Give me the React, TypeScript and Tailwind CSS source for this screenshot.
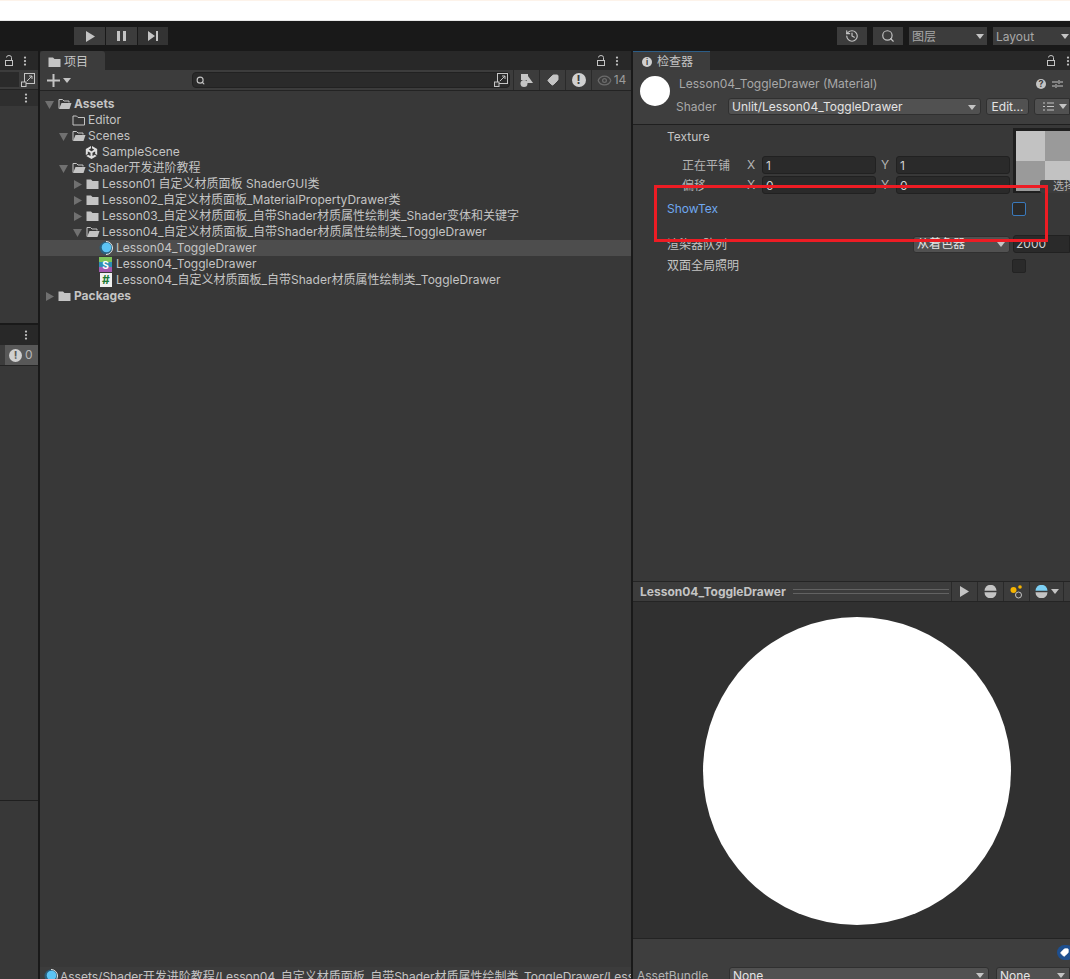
import type { ReactNode } from 'react';
import { Eye, History, MoreVertical, Search, Tag } from 'lucide-react';
import { FaUnity } from 'react-icons/fa6';

const Arrow = ({ open }: { open?: boolean }) => (
    <svg width="11" height="11" viewBox="0 0 11 11" className="shrink-0">
        {open ? <path d="M1 2h9L5.500 10z" fill="#707070" /> : <path d="M2 1v9l8-4.500z" fill="#707070" />}
    </svg>
);

const FolderFull = () => (
    <svg width="13" height="12" viewBox="0 0 13 12" className="shrink-0">
        <path d="M0.500 1.500h4.500l1.500 1.500h6v8h-12z" fill="#c4c4c4" />
    </svg>
);

const FolderOpen = () => (
    <svg width="14" height="12" viewBox="0 0 14 12" className="shrink-0">
        <path d="M1 10.500v-9h3.500l1.500 1.500h5v1.500" fill="none" stroke="#c4c4c4" />
        <path d="M1 11l2.500-6h10l-2 6z" fill="#c4c4c4" />
    </svg>
);

const FolderEmpty = () => (
    <svg width="13" height="12" viewBox="0 0 13 12" className="shrink-0">
        <path d="M1 2h3.500l1.500 1.500h6.500v7.500h-11.500z" fill="none" stroke="#c4c4c4" />
    </svg>
);

const MaterialIcon = () => (
    <svg width="14" height="14" viewBox="0 0 14 14" className="shrink-0 -ml-[1px]">
        <circle cx="7" cy="7" r="6.500" fill="#2b5f7c" />
        <path d="M7 0.500a6.500 6.500 0 0 1 0 13" fill="none" stroke="#e8e8e8" strokeWidth="1" />
        <circle cx="7.500" cy="6.500" r="4.800" fill="#5cc4f5" />
    </svg>
);

const ShaderIcon = () => (
    <svg width="13" height="15" viewBox="0 0 13 15" className="shrink-0 -ml-[1px]">
        <rect width="13" height="5" fill="#7cc35a" />
        <rect y="5" width="13" height="5" fill="#2f8fb5" />
        <rect y="10" width="13" height="5" fill="#a45bb0" />
        <text x="6.500" y="11.500" textAnchor="middle" fontSize="10" fontWeight="700" fill="#fff" fontFamily="Inter, sans-serif">S</text>
    </svg>
);

const ScriptIcon = () => (
    <div className="w-[12px] h-[14px] bg-[#f0f0f0] shrink-0 flex items-center justify-center text-[12px] font-bold leading-none text-[#1c7a35]">
        #
    </div>
);

const LockIcon = () => (
    <svg width="9" height="11" viewBox="0 0 9 11" className="shrink-0">
        <path d="M1.500 2.500a2.500 2 0 0 1 5 0V5" fill="none" stroke="#c4c4c4" />
        <rect x="0.500" y="5.500" width="7" height="5" fill="none" stroke="#c4c4c4" />
    </svg>
);

const Dots = () => <MoreVertical size={12} strokeWidth={2.500} color="#c4c4c4" className="shrink-0" />;

const SearchTypeIcon = () => (
    <svg width="14" height="14" viewBox="0 0 14 14" className="shrink-0">
        <rect x="3.500" y="0.500" width="10" height="10" fill="none" stroke="#c4c4c4" />
        <path d="M6 8l5-5M8 3h3v3" fill="none" stroke="#c4c4c4" />
        <rect x="0.500" y="9" width="4.500" height="4.500" fill="#383838" stroke="#c4c4c4" />
    </svg>
);

const Caret = ({ color = '#c4c4c4' }: { color?: string }) => (
    <svg width="8" height="5" viewBox="0 0 8 5" className="shrink-0">
        <path d="M0 0h8L4 5z" fill={color} />
    </svg>
);

const SplitSphere = ({ top = '#c4c4c4' }: { top?: string }) => (
    <svg width="13" height="13" viewBox="0 0 13 13" className="shrink-0">
        <path d="M0.500 5.800a6 6 0 0 1 12 0z" fill={top} />
        <path d="M0.500 7.300a6 6 0 0 0 12 0z" fill="#c4c4c4" />
    </svg>
);

type RowProps = { indent: number; icon?: ReactNode; arrow?: 'open' | 'closed'; selected?: boolean; bold?: boolean; children: ReactNode };

const TreeRow = ({ indent, icon, arrow, selected, bold, children }: RowProps) => (
    <div
        className={`h-[16px] flex items-center whitespace-nowrap ${selected ? 'bg-[#4d4d4d]' : ''} ${bold ? 'font-bold' : ''}`}
        style={{ paddingLeft: indent }}
    >
        <div className="w-[14px] shrink-0 flex items-center">{arrow && <Arrow open={arrow === 'open'} />}</div>
        <div className="w-[14px] shrink-0 flex items-center">{icon}</div>
        <span className="ml-[2px]">{children}</span>
    </div>
);

const Dropdown = ({ className, children }: { className: string; children: ReactNode }) => (
    <div className={`flex items-center justify-between rounded-[3px] bg-[#515151] border border-[#303030] pl-[3px] pr-[4px] overflow-hidden whitespace-nowrap text-[#e4e4e4] ${className}`}>
        {children}
    </div>
);

const NumberField = ({ label, value }: { label: string; value: string }) => (
    <div className="flex items-center">
        <span className="w-[15px] text-[#b4b4b4] shrink-0">{label}</span>
        <div className="w-[114px] h-[18px] rounded-[3px] bg-[#2a2a2a] border border-[#212121] px-[3px] pt-[2px] flex items-center text-[#d2d2d2]">{value}</div>
    </div>
);

const IconCell = ({ children, className = '' }: { children: ReactNode; className?: string }) => (
    <div className={`h-full flex items-center justify-center border-l border-[#2a2a2a] ${className}`}>{children}</div>
);

const App = () => {
    return (
        <div
            className="relative w-[1070px] h-[979px] overflow-hidden bg-[#191919] text-[12px] leading-[16px] text-[#c4c4c4] flex flex-col"
            style={{ fontFamily: 'Inter, "Noto Sans CJK SC", sans-serif' }}
        >
            {/* browser strip above the editor */}
            <div className="h-[21px] shrink-0 bg-white border-t border-[#fdf3ea] border-b border-b-[#e8e8e8]" />

            {/* play bar */}
            <div className="h-[30px] shrink-0 bg-[#191919] flex items-center">
                <div className="ml-[74px] flex gap-[1px] h-[18px]">
                    <div className="w-[31px] bg-[#3c3c3c] flex items-center justify-center">
                        <svg width="10" height="11" viewBox="0 0 10 11"><path d="M1 0v11l9-5.500z" fill="#c4c4c4" /></svg>
                    </div>
                    <div className="w-[31px] bg-[#3c3c3c] flex items-center justify-center">
                        <svg width="9" height="10" viewBox="0 0 9 10"><path d="M0 0h3v10H0zM6 0h3v10H6z" fill="#c4c4c4" /></svg>
                    </div>
                    <div className="w-[30px] bg-[#333333] flex items-center justify-center">
                        <svg width="10" height="10" viewBox="0 0 10 10"><path d="M0 0v10l7-5zM8 0h2v10H8z" fill="#c4c4c4" /></svg>
                    </div>
                </div>
                <div className="ml-auto flex items-center h-[18px] text-[#a8a8a8]">
                    <div className="w-[30px] h-full bg-[#3c3c3c] flex items-center justify-center"><History size={14} color="#c4c4c4" /></div>
                    <div className="ml-[6px] w-[30px] h-full bg-[#3c3c3c] flex items-center justify-center"><Search size={14} color="#c4c4c4" /></div>
                    <div className="ml-[6px] w-[78px] h-full bg-[#3c3c3c] flex items-center justify-between pl-[3px] pr-[3px] pt-[1px]">图层<Caret /></div>
                    <div className="ml-[6px] w-[77px] h-full bg-[#3c3c3c] flex items-center justify-between pl-[3px] pr-[1px] pt-[1px]">Layout<Caret /></div>
                </div>
            </div>

            <div className="flex-1 min-h-0 flex gap-[2px]">
                {/* hierarchy and console, cut off by the crop */}
                <div className="w-[38px] shrink-0 flex flex-col bg-[#383838]">
                    <div className="h-[19px] shrink-0 bg-[#282828] flex items-center justify-end gap-[5px] pr-[7px]"><LockIcon /><Dots /></div>
                    <div className="h-[20px] shrink-0 bg-[#3c3c3c] border-b border-[#232323] flex items-center justify-end gap-[2px] pr-[3px]">
                        <div className="flex-1 h-[15px] bg-[#2a2a2a]" />
                        <SearchTypeIcon />
                    </div>
                    <div className="h-[16px] shrink-0 bg-[#2e2e2e] flex items-center justify-end pr-[6px]"><Dots /></div>
                    <div className="h-[217px] shrink-0" />
                    <div className="h-[2px] shrink-0 bg-[#191919]" />
                    <div className="h-[20px] shrink-0 bg-[#282828] flex items-center justify-end pr-[6px]"><Dots /></div>
                    <div className="h-[21px] shrink-0 bg-[#3c3c3c] border-b border-[#232323] flex items-center justify-end">
                        <div className="w-[33px] h-full bg-[#585858] flex items-center gap-[3px] pl-[4px]">
                            <div className="w-[13px] h-[13px] rounded-full bg-[#d0d0d0] text-[#585858] text-[11px] font-bold flex items-center justify-center">!</div>
                            <span className="text-[#b8b8b8]">0</span>
                        </div>
                    </div>
                    <div className="h-[435px] shrink-0 border-b border-[#1f1f1f]" />
                </div>

                {/* project panel */}
                <div className="w-[591px] shrink-0 flex flex-col bg-[#383838]">
                    <div className="h-[19px] shrink-0 bg-[#282828] flex items-stretch">
                        <div className="w-[65px] bg-[#3c3c3c] rounded-t-[3px] flex items-center gap-[3px] pl-[8px] pt-[2px] text-[#c4c4c4]">
                            <FolderFull />
                            <span>项目</span>
                        </div>
                        <div className="ml-auto flex items-center gap-[5px] pr-[8px]"><LockIcon /><Dots /></div>
                    </div>
                    <div className="h-[21px] shrink-0 bg-[#3c3c3c] border-b border-[#232323] flex items-center">
                        <div className="ml-[7px] flex items-center gap-[3px] w-[145px]">
                            <svg width="13" height="13" viewBox="0 0 13 13"><path d="M5.500 0h2v5.500H13v2H7.500V13h-2V7.500H0v-2h5.500z" fill="#c4c4c4" /></svg>
                            <Caret />
                        </div>
                        <div className="w-[318px] h-[16px] shrink-0 rounded-[4px] bg-[#2a2a2a] border border-[#212121] flex items-center justify-between pl-[3px] pr-[1px]">
                            <Search size={9} color="#c4c4c4" strokeWidth={3} />
                            <SearchTypeIcon />
                        </div>
                        <IconCell className="ml-[3px] w-[26px] shrink-0">
                            <svg width="13" height="13" viewBox="0 0 13 13">
                                <rect x="1" y="0" width="7" height="6" fill="#c4c4c4" />
                                <path d="M8 2l5 7H6z" fill="#c4c4c4" />
                                <circle cx="4" cy="9.500" r="3.500" fill="#c4c4c4" />
                            </svg>
                        </IconCell>
                        <IconCell className="w-[26px] shrink-0"><Tag size={12} fill="#c4c4c4" color="#c4c4c4" className="rotate-90" /></IconCell>
                        <IconCell className="w-[26px] shrink-0">
                            <div className="w-[14px] h-[14px] rounded-full bg-[#d0d0d0] text-[#3c3c3c] text-[12px] font-bold flex items-center justify-center">!</div>
                        </IconCell>
                        <IconCell className="flex-1 gap-[2px]">
                            <Eye size={15} color="#6c6c6c" strokeWidth={2} />
                            <span className="text-[#9a9a9a]">14</span>
                        </IconCell>
                    </div>

                    <div className="flex-1 pt-[5px]">
                        <TreeRow indent={4} arrow="open" icon={<FolderOpen />} bold>Assets</TreeRow>
                        <TreeRow indent={18} icon={<FolderEmpty />}>Editor</TreeRow>
                        <TreeRow indent={18} arrow="open" icon={<FolderOpen />}>Scenes</TreeRow>
                        <TreeRow indent={32} icon={<FaUnity size={13} color="#e0e0e0" className="-ml-[1px]" />}>SampleScene</TreeRow>
                        <TreeRow indent={18} arrow="open" icon={<FolderOpen />}>Shader开发进阶教程</TreeRow>
                        <TreeRow indent={32} arrow="closed" icon={<FolderFull />}>Lesson01 自定义材质面板 ShaderGUI类</TreeRow>
                        <TreeRow indent={32} arrow="closed" icon={<FolderFull />}>Lesson02_自定义材质面板_MaterialPropertyDrawer类</TreeRow>
                        <TreeRow indent={32} arrow="closed" icon={<FolderFull />}>Lesson03_自定义材质面板_自带Shader材质属性绘制类_Shader变体和关键字</TreeRow>
                        <TreeRow indent={32} arrow="open" icon={<FolderOpen />}>Lesson04_自定义材质面板_自带Shader材质属性绘制类_ToggleDrawer</TreeRow>
                        <TreeRow indent={46} icon={<MaterialIcon />} selected>Lesson04_ToggleDrawer</TreeRow>
                        <TreeRow indent={46} icon={<ShaderIcon />}>Lesson04_ToggleDrawer</TreeRow>
                        <TreeRow indent={46} icon={<ScriptIcon />}>Lesson04_自定义材质面板_自带Shader材质属性绘制类_ToggleDrawer</TreeRow>
                        <TreeRow indent={4} arrow="closed" icon={<FolderFull />} bold>Packages</TreeRow>
                    </div>

                    <div className="h-[12px] shrink-0 bg-[#3c3c3c] flex items-start gap-[2px] pl-[5px] pt-[2px] whitespace-nowrap overflow-hidden">
                        <MaterialIcon />
                        <span>Assets/Shader开发进阶教程/Lesson04_自定义材质面板_自带Shader材质属性绘制类_ToggleDrawer/Lesson04_ToggleDrawer.mat</span>
                    </div>
                </div>

                {/* inspector */}
                <div className="flex-1 min-w-0 flex flex-col bg-[#383838]">
                    <div className="h-[19px] shrink-0 bg-[#282828] flex items-stretch">
                        <div className="w-[77px] bg-[#3c3c3c] border-t border-[#2c5d87] flex items-center gap-[5px] pl-[9px] pt-[1px]">
                            <div className="w-[10px] h-[10px] rounded-full bg-[#d0d0d0] text-[#3c3c3c] text-[8px] font-bold flex items-center justify-center">i</div>
                            <span>检查器</span>
                        </div>
                        <div className="ml-auto w-[23px] shrink-0 flex items-center gap-[6px]"><LockIcon /><Dots /></div>
                    </div>

                    <div className="h-[55px] shrink-0 bg-[#3e3e3e] border-b border-[#1f1f1f] flex">
                        <div className="w-[30px] h-[30px] mt-[6px] ml-[7px] rounded-full bg-white shrink-0" />
                        <div className="flex-1 min-w-0 flex flex-col">
                            <div className="mt-[5px] h-[17px] flex items-center pl-[9px] text-[#a8a8a8]">
                                Lesson04_ToggleDrawer (Material)
                                <div className="ml-auto flex items-center gap-[6px] pr-[7px]">
                                    <div className="w-[10px] h-[10px] rounded-full bg-[#c4c4c4] text-[#3e3e3e] text-[9px] font-bold flex items-center justify-center">?</div>
                                    <svg width="11" height="10" viewBox="0 0 11 10"><path d="M0 3h6M8 3h3M0 7h3M5 7h6M7 1v4M4 5v4" stroke="#c4c4c4" fill="none" /></svg>
                                </div>
                            </div>
                            <div className="mt-[6px] flex items-center h-[17px] text-[#a8a8a8]">
                                <span className="w-[58px] pl-[6px] shrink-0 pt-[1px]">Shader</span>
                                <Dropdown className="w-[253px] h-[17px] shrink-0 pt-[1px]">
                                    Unlit/Lesson04_ToggleDrawer<Caret />
                                </Dropdown>
                                <div className="ml-[5px] w-[43px] h-[17px] shrink-0 rounded-[3px] bg-[#515151] border border-[#303030] flex items-center justify-center text-[#e4e4e4] pt-[1px]">Edit...</div>
                                <div className="ml-[5px] flex-1 h-[17px] rounded-l-[3px] bg-[#515151] border border-[#303030] flex items-center gap-[5px] pl-[8px]">
                                    <svg width="11" height="9" viewBox="0 0 11 9"><path d="M0 1h2M4 1h7M0 4.500h2M4 4.500h7M0 8h2M4 8h7" stroke="#c4c4c4" fill="none" /></svg>
                                    <Caret />
                                </div>
                            </div>
                        </div>
                    </div>

                    <div className="relative h-[456px] shrink-0 pt-[3px]">
                        <div className="flex">
                            <div className="w-[380px] shrink-0">
                                <div className="h-[16px] pl-[34px] flex items-center mt-[1px]">Texture</div>
                                <div className="mt-[11px] flex items-center pl-[49px] h-[18px]">
                                    <span className="w-[65px] text-[#b4b4b4] pt-[1px]">正在平铺</span>
                                    <NumberField label="X" value="1" />
                                    <div className="w-[5px]" />
                                    <NumberField label="Y" value="1" />
                                </div>
                                <div className="mt-[2px] flex items-center pl-[49px] h-[18px]">
                                    <span className="w-[65px] text-[#b4b4b4] pt-[1px]">偏移</span>
                                    <NumberField label="X" value="0" />
                                    <div className="w-[5px]" />
                                    <NumberField label="Y" value="0" />
                                </div>
                            </div>
                            <div className="relative w-[60px] h-[65px] shrink-0 bg-[#1f1f1f] pl-[3px] pt-[3px] overflow-hidden">
                                <div className="grid grid-cols-[29px_29px] grid-rows-[30px_30px]">
                                    <div className="bg-[#c2c2c2]" />
                                    <div className="bg-[#9a9a9a]" />
                                    <div className="bg-[#9a9a9a]" />
                                    <div className="bg-[#c2c2c2]" />
                                </div>
                                <div className="absolute left-[27px] top-[52px] w-[40px] h-[13px] rounded-[2px] bg-[#3c3c3c] text-[#b4b4b4] text-[11px] leading-[13px] pl-[13px] whitespace-nowrap">选择</div>
                            </div>
                        </div>

                        <div className="mt-[6px] flex items-center h-[16px] pl-[34px] text-[#6fa8f0]">
                            <span className="w-[345px] pt-[1px]">ShowTex</span>
                            <div className="w-[14px] h-[14px] mt-[1px] shrink-0 rounded-[2px] border border-[#3a79bb] bg-[#2a2a2a]" />
                        </div>

                        <div className="mt-[19px] flex items-center h-[18px] pl-[34px]">
                            <span className="w-[246px] pt-[1px]">渲染器队列</span>
                            <Dropdown className="w-[97px] h-[17px] shrink-0">从着色器<Caret /></Dropdown>
                            <div className="ml-[3px] flex-1 h-[18px] rounded-l-[3px] bg-[#2a2a2a] border border-[#212121] pl-[2px] flex items-center text-[#d2d2d2]">2000</div>
                        </div>

                        <div className="mt-[5px] flex items-center h-[16px] pl-[34px]">
                            <span className="w-[345px]">双面全局照明</span>
                            <div className="w-[14px] h-[14px] shrink-0 rounded-[2px] border border-[#232323] bg-[#2a2a2a]" />
                        </div>
                    </div>

                    <div className="h-[21px] shrink-0 bg-[#3c3c3c] border-y border-[#242424] flex items-center font-bold text-[#c4c4c4]">
                        <span className="w-[160px] pl-[7px] whitespace-nowrap shrink-0">Lesson04_ToggleDrawer</span>
                        <div className="w-[156px] h-[5px] shrink-0 border-y border-[#626262]" />
                        <IconCell className="ml-[2px] w-[26px] shrink-0">
                            <svg width="9" height="11" viewBox="0 0 9 11"><path d="M0 0v11l9-5.500z" fill="#c4c4c4" /></svg>
                        </IconCell>
                        <IconCell className="w-[26px] shrink-0"><SplitSphere /></IconCell>
                        <IconCell className="w-[26px] shrink-0">
                            <svg width="14" height="14" viewBox="0 0 14 14">
                                <circle cx="3.500" cy="5" r="3" fill="#f5b400" />
                                <circle cx="10" cy="2" r="1.800" fill="#f5b400" />
                                <circle cx="8.500" cy="10" r="3" fill="none" stroke="#c4c4c4" />
                            </svg>
                        </IconCell>
                        <IconCell className="w-[35px] shrink-0 gap-[3px] border-r"><SplitSphere top="#7cd0f5" /><Caret /></IconCell>
                    </div>

                    <div className="h-[336px] shrink-0 bg-[#303030] flex items-center justify-center pl-[11px] pt-[2px]">
                        <div className="w-[308px] h-[308px] shrink-0 rounded-full bg-white" />
                    </div>

                    <div className="flex-1 min-h-0 bg-[#3e3e3e] border-t border-[#232323] relative">
                        <div className="absolute -right-[4px] top-[6px] w-[17px] h-[15px] rounded-full bg-[#1e4f8f] flex items-center justify-center pr-[3px]">
                            <Tag size={9} fill="#ffffff" color="#ffffff" className="rotate-90" />
                        </div>
                        <div className="mt-[28px] flex items-center h-[16px] pl-[4px] pt-[1px]">
                            <span className="w-[92px] text-[#b4b4b4] shrink-0">AssetBundle</span>
                            <Dropdown className="w-[260px] h-[17px] shrink-0">None<Caret /></Dropdown>
                            <Dropdown className="ml-[7px] flex-1 h-[17px] rounded-r-none">None<Caret /></Dropdown>
                        </div>
                    </div>
                </div>
            </div>

            {/* annotation drawn on top of the screenshot */}
            <div className="absolute left-[654px] top-[185px] w-[394px] h-[57px] border-[3px] border-[#ed1c24] pointer-events-none" />
        </div>
    );
};

export default App;
